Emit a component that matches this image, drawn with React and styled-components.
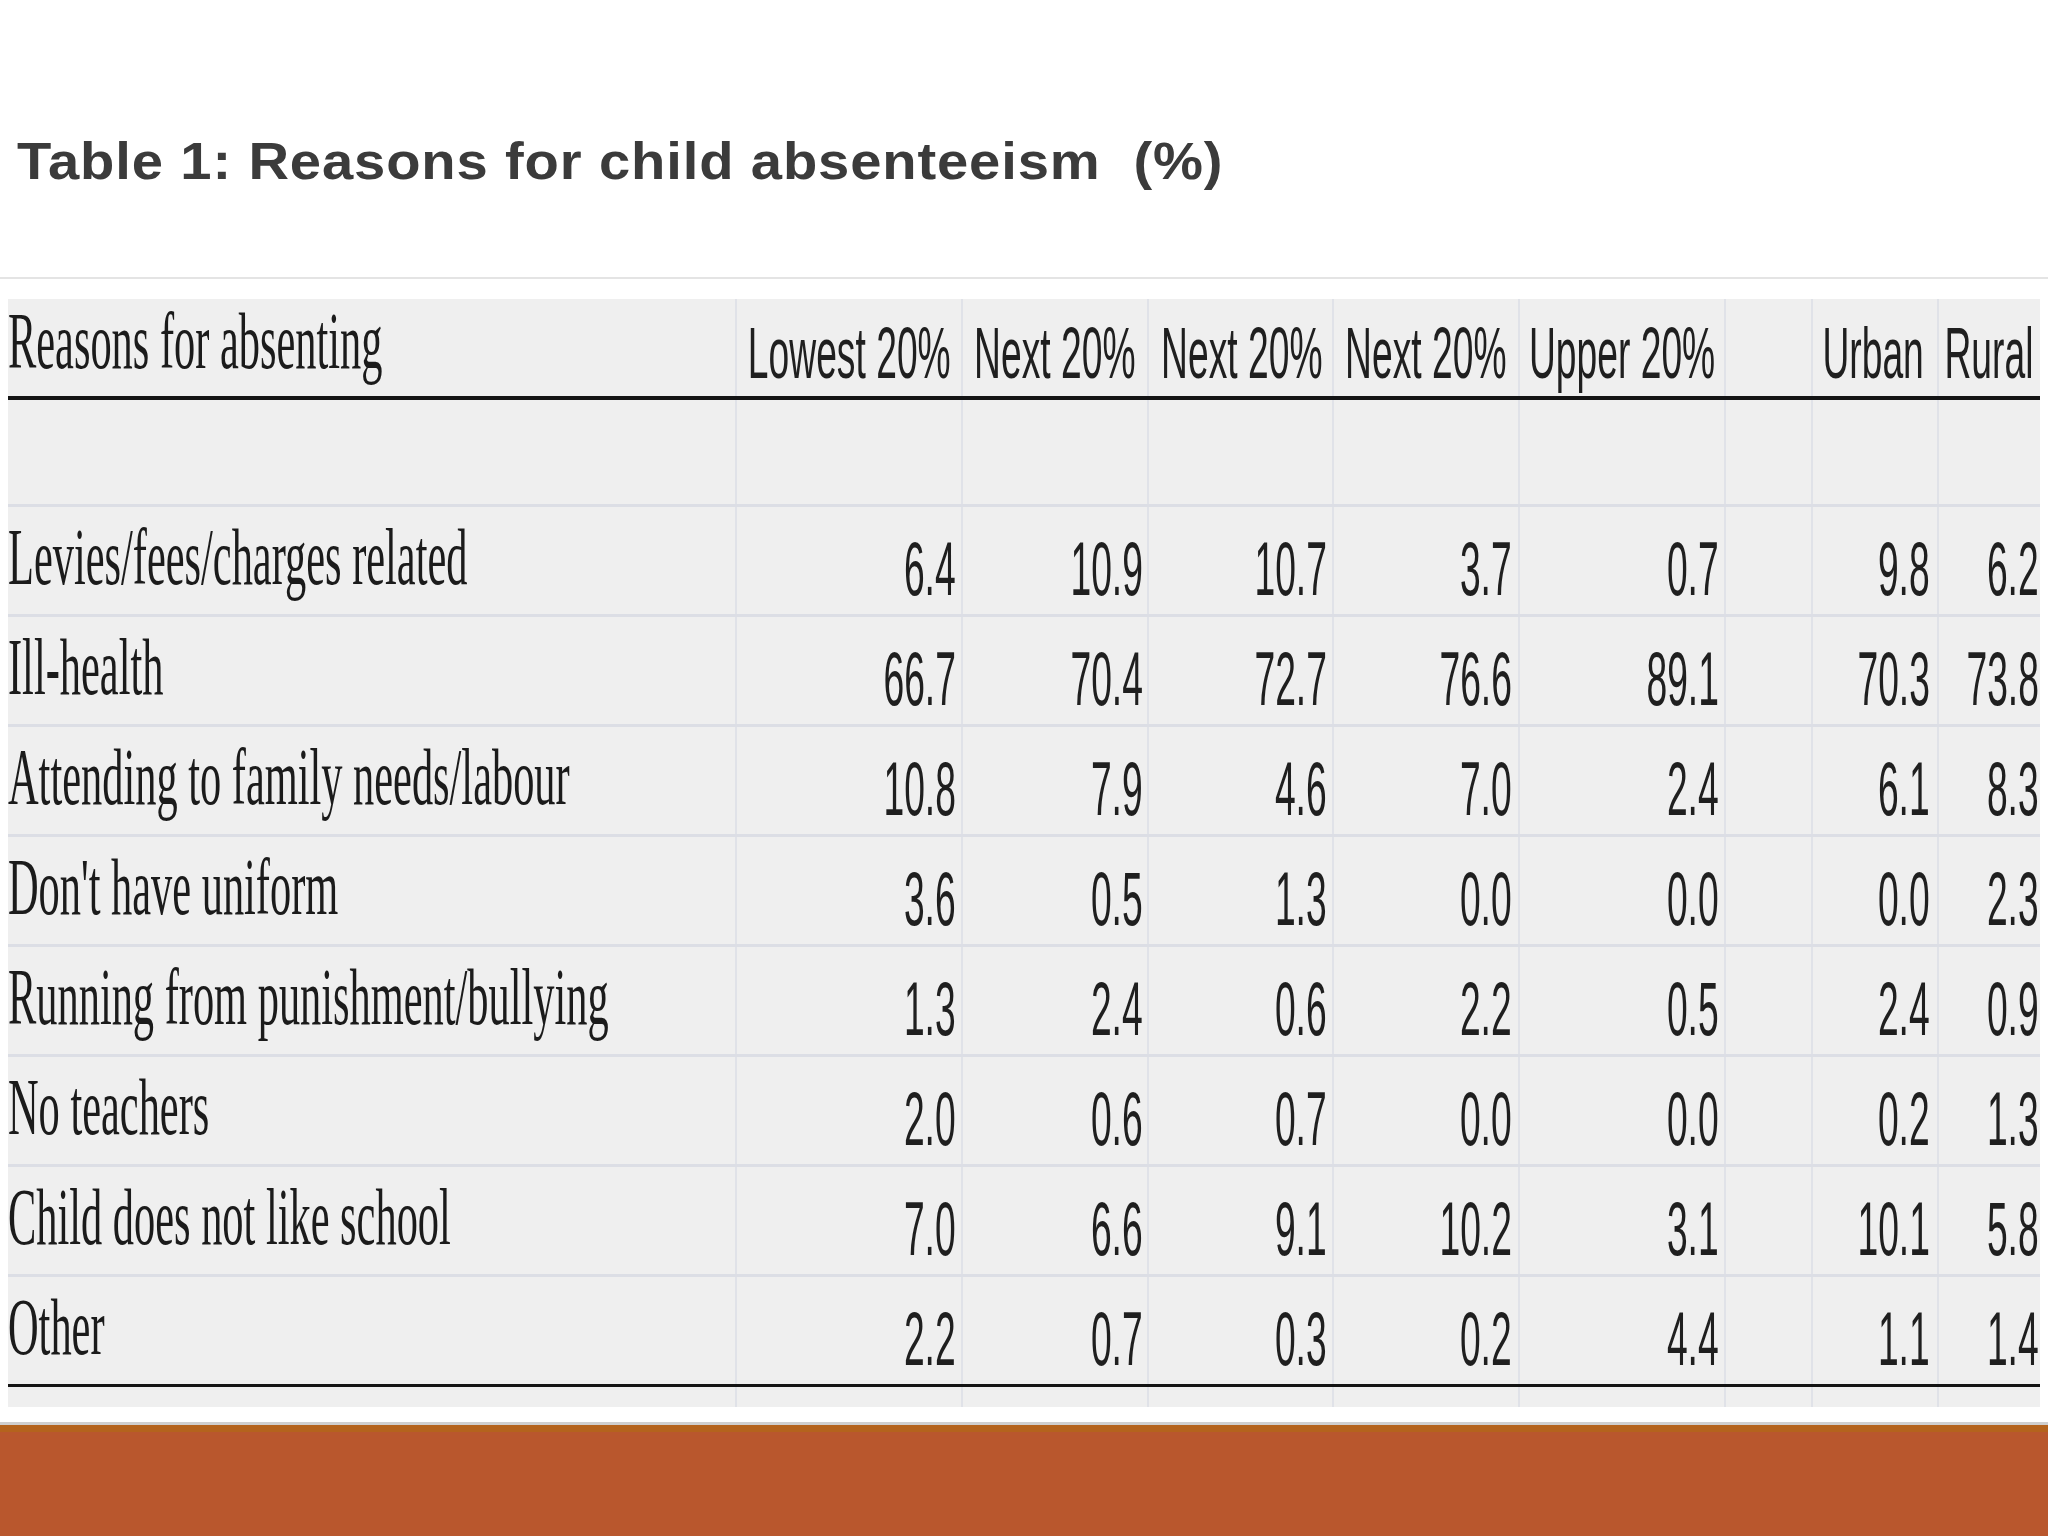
import React from "react";
import styled, { createGlobalStyle } from "styled-components";

const Global = createGlobalStyle`
  html, body { margin: 0; padding: 0; background: #ffffff; }
  #root { width: 2048px; height: 1536px; }
`;

const Page = styled.div`
  width: 2048px;
  height: 1536px;
  display: flex;
  flex-direction: column;
  overflow: hidden;
  background: #ffffff;
`;

const TitleBar = styled.div`
  padding: 135px 0 0 17px;
  height: 52px;
`;

const Title = styled.h1`
  display: inline-block;
  margin: 0;
  font-family: "Liberation Sans", Arial, sans-serif;
  font-weight: 700;
  font-size: 52px;
  line-height: 52px;
  letter-spacing: 0.8px;
  color: #3b3b3b;
  white-space: pre;
  transform: scaleX(1.08);
  transform-origin: left top;
`;

const Rule = styled.div`
  margin-top: 90px;
  height: 2px;
  background: #e4e4e4;
`;

const Table = styled.div`
  margin: 20px 0 0 8px;
  width: 2032px;
  height: 1108px;
  background: #efefef;
  display: flex;
  flex-direction: column;
`;

const cols = "727px 226px 186px 185px 186px 206px 87px 126px 103px";

const Row = styled.div`
  display: grid;
  grid-template-columns: ${cols};
  box-sizing: border-box;
  height: ${(p) => p.$h}px;
  border-top: ${(p) => (p.$sep ? "3px solid #dcdee5" : "none")};
  border-bottom: ${(p) => (p.$rule ? `${p.$rule}px solid #141414` : "none")};
`;

const Cell = styled.div`
  display: flex;
  justify-content: ${(p) => (p.$left ? "flex-start" : "flex-end")};
  align-items: flex-start;
  box-sizing: border-box;
  min-width: 0;
  border-left: ${(p) => (p.$first ? "none" : "2px solid #e0e2e8")};
  padding-top: ${(p) => p.$pt || 0}px;
  padding-right: ${(p) => p.$pr || 0}px;
`;

const SerifText = styled.span`
  display: inline-block;
  flex: none;
  white-space: nowrap;
  font-family: "Liberation Serif", "Times New Roman", serif;
  font-size: 80px;
  line-height: 80px;
  color: #1b1b1b;
  transform: scaleX(0.53);
  transform-origin: left top;
`;

const SansText = styled.span`
  display: inline-block;
  flex: none;
  white-space: nowrap;
  font-family: "Liberation Sans", Arial, sans-serif;
  font-size: ${(p) => p.$size}px;
  line-height: ${(p) => p.$size}px;
  color: #1f1f1f;
  transform: scaleX(${(p) => p.$sx});
  transform-origin: right top;
`;

const Gap = styled.div`
  height: 15px;
`;

const Band = styled.div`
  flex: 1;
  border-top: 3px solid #cfcfcf;
  background: #b9572d;
  box-shadow: inset 0 7px 0 #b4631d;
`;

const headers = [
  "Lowest 20%",
  "Next 20%",
  "Next 20%",
  "Next 20%",
  "Upper 20%",
  "",
  "Urban",
  "Rural",
];

const rows = [
  ["Levies/fees/charges related", "6.4", "10.9", "10.7", "3.7", "0.7", "9.8", "6.2"],
  ["Ill-health", "66.7", "70.4", "72.7", "76.6", "89.1", "70.3", "73.8"],
  ["Attending to family needs/labour", "10.8", "7.9", "4.6", "7.0", "2.4", "6.1", "8.3"],
  ["Don't have uniform", "3.6", "0.5", "1.3", "0.0", "0.0", "0.0", "2.3"],
  ["Running from punishment/bullying", "1.3", "2.4", "0.6", "2.2", "0.5", "2.4", "0.9"],
  ["No teachers", "2.0", "0.6", "0.7", "0.0", "0.0", "0.2", "1.3"],
  ["Child does not like school", "7.0", "6.6", "9.1", "10.2", "3.1", "10.1", "5.8"],
  ["Other", "2.2", "0.7", "0.3", "0.2", "4.4", "1.1", "1.4"],
];

const headPad = [10, 12, 10, 12, 9, 0, 13, 7];
const numPad = [5, 4, 5, 6, 5, 0, 7, 1];

function EmptyCells() {
  return Array.from({ length: 8 }, (_, i) => <Cell key={i} />);
}

function DataRow({ row, last }) {
  const [label, ...vals] = row;
  const cells = [...vals.slice(0, 5), "", ...vals.slice(5)];
  return (
    <Row $h={last ? 113 : 110} $sep $rule={last ? 3 : 0}>
      <Cell $first $left $pt={10}>
        <SerifText>{label}</SerifText>
      </Cell>
      {cells.map((v, i) => (
        <Cell key={i} $pt={24} $pr={numPad[i]}>
          {v && (
            <SansText $size={76} $sx={0.49}>
              {v}
            </SansText>
          )}
        </Cell>
      ))}
    </Row>
  );
}

export default function App() {
  return (
    <Page>
      <Global />
      <TitleBar>
        <Title>{"Table 1: Reasons for child absenteeism  (%)"}</Title>
      </TitleBar>
      <Rule />
      <Table>
        <Row $h={101} $rule={4}>
          <Cell $first $left $pt={2}>
            <SerifText>Reasons for absenting</SerifText>
          </Cell>
          {headers.map((h, i) => (
            <Cell key={i} $pt={17} $pr={headPad[i]}>
              {h && (
                <SansText $size={73} $sx={0.51}>
                  {h}
                </SansText>
              )}
            </Cell>
          ))}
        </Row>
        <Row $h={104}>
          <Cell $first />
          <EmptyCells />
        </Row>
        {rows.map((r, i) => (
          <DataRow key={i} row={r} last={i === rows.length - 1} />
        ))}
        <Row $h={20}>
          <Cell $first />
          <EmptyCells />
        </Row>
      </Table>
      <Gap />
      <Band />
    </Page>
  );
}
